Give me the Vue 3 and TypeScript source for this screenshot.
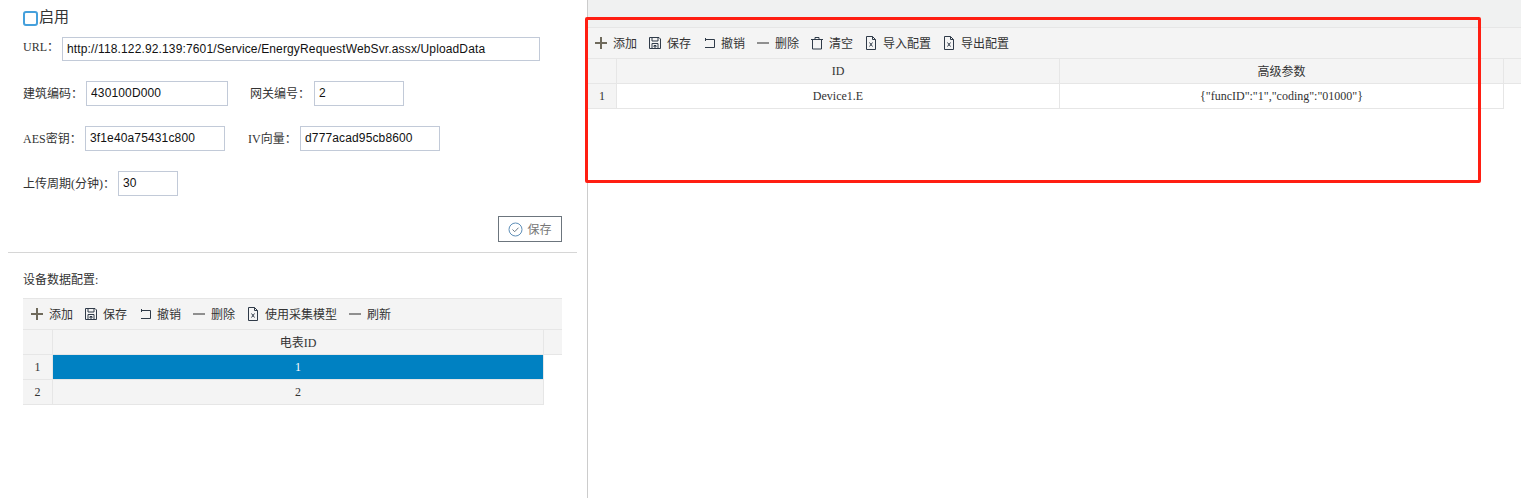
<script setup lang="ts">
import { ref } from 'vue'

type Tool = { icon: string; text: string }

const icons: Record<string, string> = {
  plus: 'M6 0v12M0 6h12',
  save: 'M.5.5h9.5l1.5 1.5v9.5H.5zM3 .5v3.5h6V.5M3 11.5V6.5h6v5M5 8.5h2v1.5H5z',
  undo: 'M2 2.5h9.5v8H2M2.5 1v3',
  minus: 'M0 6h12',
  trash: 'M0 2.5h12M4 2.5V.5h4v2M1.5 2.5v9.5h9V2.5',
  excel: 'M1.5-.5h6l3 3v10h-9zM7.5-.5v3h3M4.5 5.5l3 4M7.5 5.5l-3 4'
}

const leftTools: Tool[] = [
  { icon: 'plus', text: '添加' },
  { icon: 'save', text: '保存' },
  { icon: 'undo', text: '撤销' },
  { icon: 'minus', text: '删除' },
  { icon: 'excel', text: '使用采集模型' },
  { icon: 'minus', text: '刷新' }
]

const rightTools: Tool[] = [
  { icon: 'plus', text: '添加' },
  { icon: 'save', text: '保存' },
  { icon: 'undo', text: '撤销' },
  { icon: 'minus', text: '删除' },
  { icon: 'trash', text: '清空' },
  { icon: 'excel', text: '导入配置' },
  { icon: 'excel', text: '导出配置' }
]

const enabled = ref(false)
const url = ref('http://118.122.92.139:7601/Service/EnergyRequestWebSvr.assx/UploadData')
const buildCode = ref('430100D000')
const gateway = ref('2')
const aesKey = ref('3f1e40a75431c800')
const ivKey = ref('d777acad95cb8600')
const period = ref('30')
const selectedRow = ref(1)
const meters = ['1', '2']
</script>

<template>
  <div class="page">
    <section class="left">
      <label class="enable">
        <input v-model="enabled" class="check" type="checkbox" />
        <span>启用</span>
      </label>

      <div class="form-row row-url">
        <label class="lbl w-url">URL：</label>
        <input v-model="url" class="ipt w-full" />
      </div>
      <div class="form-row">
        <label class="lbl w-code">建筑编码：</label>
        <input v-model="buildCode" class="ipt w-142" />
        <label class="lbl w-gate">网关编号：</label>
        <input v-model="gateway" class="ipt w-90" />
      </div>
      <div class="form-row">
        <label class="lbl w-aes">AES密钥：</label>
        <input v-model="aesKey" class="ipt w-140" />
        <label class="lbl w-iv">IV向量：</label>
        <input v-model="ivKey" class="ipt w-140" />
      </div>
      <div class="form-row">
        <label class="lbl w-period">上传周期(分钟)：</label>
        <input v-model="period" class="ipt w-60" />
      </div>

      <div class="submit">
        <button class="save-btn" type="button">
          <svg width="15" height="15" viewBox="0 0 15 15" fill="none">
            <circle cx="7.5" cy="7.5" r="6.5" stroke="#5f8fb8" />
            <path d="M4.5 7.5l2.2 2.2 3.8-4" stroke="#6c7a86" />
          </svg>
          <span>保存</span>
        </button>
      </div>
      <div class="divider"></div>

      <div class="sub-title">设备数据配置:</div>
      <div class="panel panel-left">
        <div class="toolbar">
          <a v-for="(tool, i) in leftTools" :key="i" class="tool">
            <svg width="12" height="14" viewBox="0 -1 12 14" fill="none">
              <path :class="`ico-${tool.icon}`" :d="icons[tool.icon]" />
            </svg>
            <span>{{ tool.text }}</span>
          </a>
        </div>
        <div class="grid-row head">
          <div class="cell idx"></div>
          <div class="cell">电表ID</div>
          <div class="cell last"></div>
        </div>
        <div v-for="(m, i) in meters" :key="m" class="grid-row">
          <div class="cell idx">{{ i + 1 }}</div>
          <div class="cell body-cell" :class="i + 1 === selectedRow ? 'selected' : 'alt'">{{ m }}</div>
        </div>
      </div>
    </section>

    <section class="right">
      <div class="topbar"></div>
      <div class="panel panel-right">
        <div class="toolbar">
          <a v-for="(tool, i) in rightTools" :key="i" class="tool">
            <svg width="12" height="14" viewBox="0 -1 12 14" fill="none">
              <path :class="`ico-${tool.icon}`" :d="icons[tool.icon]" />
            </svg>
            <span>{{ tool.text }}</span>
          </a>
        </div>
        <div class="grid-row head">
          <div class="cell idx"></div>
          <div class="cell">ID</div>
          <div class="cell">高级参数</div>
          <div class="cell last"></div>
        </div>
        <div class="grid-row">
          <div class="cell idx">1</div>
          <div class="cell body-cell">Device1.E</div>
          <div class="cell body-cell">{"funcID":"1","coding":"01000"}</div>
        </div>
      </div>
    </section>

    <div class="mark"></div>
  </div>
</template>

<style>
html,
body {
  margin: 0;
  background: #fff;
  overflow: hidden;
}
</style>

<style scoped>
.page {
  position: relative;
  display: flex;
  height: 498px;
  font-family: "Liberation Serif", "Noto Sans CJK SC", serif;
  font-size: 12px;
  color: #333;
  overflow: hidden;
}
.left {
  box-sizing: border-box;
  width: 588px;
  flex: none;
  padding: 8px 0 0 23px;
  border-right: 1px solid #ccc;
}
.enable {
  display: flex;
  align-items: center;
  height: 20px;
  font-size: 15px;
  line-height: 18px;
}
.enable span {
  margin-top: -2px;
}
.check {
  appearance: none;
  box-sizing: border-box;
  width: 15px;
  height: 15px;
  margin: 0 1px 0 0;
  border: 2px solid #45a0dc;
  border-radius: 3px;
  background: #fff;
}
.form-row {
  display: flex;
  align-items: center;
  height: 25px;
  margin-top: 20px;
}
.row-url {
  height: 24px;
  margin-top: 9px;
}
.lbl {
  flex: none;
  margin-top: -2px;
  white-space: nowrap;
}
.row-url .lbl {
  align-self: flex-start;
  margin-top: 0;
  line-height: 20px;
}
.w-url { width: 39px; }
.w-code { width: 63px; }
.w-gate { width: 64px; margin-left: 22px; }
.w-aes { width: 62px; }
.w-iv { width: 52px; margin-left: 23px; }
.w-period { width: 95px; }
.ipt {
  box-sizing: border-box;
  flex: none;
  height: 100%;
  padding: 0 4px 1px;
  border: 1px solid #c2cad8;
  border-radius: 0;
  outline: none;
  font-family: "Liberation Sans", Arial, sans-serif;
  font-size: 12px;
  letter-spacing: 0.14px;
  color: #111;
  background: #fff;
}
.w-full { width: 478px; }
.w-142 { width: 142px; }
.w-140 { width: 140px; }
.w-90 { width: 90px; }
.w-60 { width: 60px; }
.submit {
  display: flex;
  justify-content: flex-end;
  width: 539px;
  margin-top: 20px;
}
.save-btn {
  box-sizing: border-box;
  display: flex;
  align-items: center;
  justify-content: center;
  gap: 4px;
  width: 64px;
  height: 26px;
  padding: 0;
  border: 1px solid #6c757d;
  background: #fff;
  font-family: inherit;
  font-size: 12px;
  color: #777;
}
.divider {
  width: 569px;
  height: 1px;
  margin: 10px 0 0 -15px;
  background: #d6d6d6;
}
.sub-title {
  height: 16px;
  margin-top: 19px;
  line-height: 16px;
}
.panel-left {
  width: 539px;
  margin-top: 10px;
  --cols: 30px 491px 18px;
  border-top: 1px solid #e6e6e6;
}
.panel-right {
  --cols: 29px 443px 444px 18px;
}
.toolbar {
  display: flex;
  align-items: center;
  gap: 12px;
  height: 30px;
  padding-left: 8px;
  background: #f4f4f4;
  border-bottom: 1px solid #e6e6e6;
}
.panel-right .toolbar {
  padding-left: 7px;
}
.tool {
  display: flex;
  align-items: center;
  gap: 6px;
  white-space: nowrap;
}
.tool svg {
  flex: none;
  overflow: visible;
}
.tool path {
  stroke: #2f3a48;
  stroke-width: 1;
}
.tool path.ico-plus {
  stroke: #6f6a5c;
  stroke-width: 2;
}
.tool path.ico-minus {
  stroke: #8f8f8f;
  stroke-width: 2;
}
.grid-row {
  display: grid;
  grid-template-columns: var(--cols);
  height: 25px;
}
.cell {
  box-sizing: border-box;
  display: flex;
  align-items: center;
  justify-content: center;
  border-right: 1px solid #e6e6e6;
  border-bottom: 1px solid #e6e6e6;
}
.head .cell,
.idx {
  background: #f4f4f4;
}
.last {
  border-right: 0;
}
.selected {
  background: #0081c2;
  color: #fff;
}
.alt {
  background: #f4f4f4;
}
.right {
  flex: 1;
  min-width: 0;
}
.topbar {
  height: 27px;
  background: #f0f1f1;
  border-bottom: 1px solid #e6e6e6;
}
.mark {
  position: absolute;
  left: 585px;
  top: 17px;
  box-sizing: border-box;
  width: 896px;
  height: 166px;
  border: 3px solid #ff1e12;
  border-radius: 2px;
  pointer-events: none;
}
</style>
